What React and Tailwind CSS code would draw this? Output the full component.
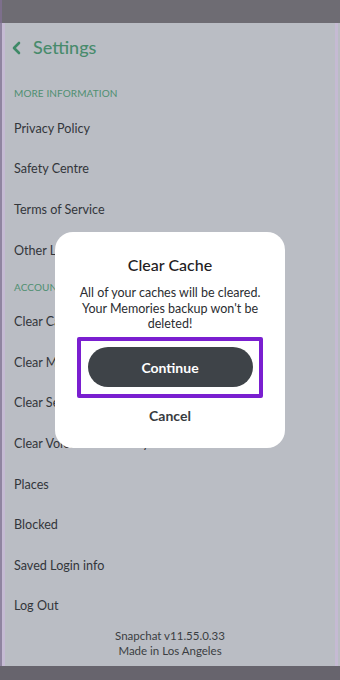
import React from "react";

const moreInfo = ["Privacy Policy", "Safety Centre", "Terms of Service", "Other Legal"];
const account = [
  "Clear Cache",
  "Clear My AI Data",
  "Clear Search History",
  "Clear Voice Scan History",
  "Places",
  "Blocked",
  "Saved Login info",
  "Log Out",
];

const Row = ({ label }) => (
  <div className="h-[40.6px] flex items-center pl-[9px] text-[12.6px] text-[#33363b]">
    {label}
  </div>
);

const SectionLabel = ({ children, className }) => (
  <div className={"pl-[9px] text-[10px] leading-[12px] tracking-[0.1px] text-[#4f8f71] " + className}>
    {children}
  </div>
);

const App = () => {
  return (
    <div
      className="relative w-[340px] h-[680px] flex flex-col bg-[#babdc4] overflow-hidden"
      style={{ fontFamily: "Lato, 'Noto Sans', sans-serif" }}
    >
      <div className="h-[23px] bg-[#6e6c73] border-l-[2px] border-[#7d6f8c]" />
      <div className="flex-1 flex">
        <div className="w-[2px] bg-[#8f84a0]" />
        <div className="w-[3px] bg-[#c5bad3]" />
        <div className="flex-1 flex flex-col">
          <div className="h-[49px] flex items-center gap-[9px] pl-[5px]">
            <svg width="14" height="14" viewBox="0 0 14 14" fill="none">
              <path d="M9 2 L4 7 L9 12" stroke="#3e8a67" strokeWidth="2.6" strokeLinecap="round" strokeLinejoin="round" />
            </svg>
            <span className="text-[18px] font-medium text-[#488b6c]">Settings</span>
          </div>
          <SectionLabel className="h-[37px] pt-[15px]">MORE INFORMATION</SectionLabel>
          {moreInfo.map((l) => (
            <Row key={l} label={l} />
          ))}
          <SectionLabel className="h-[31px] flex items-center">ACCOUNT ACTIONS</SectionLabel>
          {account.map((l) => (
            <Row key={l} label={l} />
          ))}
          <div className="pt-[1px] flex flex-col items-center text-[11.5px] leading-[15px] text-[#3a3d42]">
            <span>Snapchat v11.55.0.33</span>
            <span>Made in Los Angeles</span>
          </div>
        </div>
        <div className="w-[3px] bg-[#c5bad3]" />
        <div className="w-[2px] bg-[#b9bcc3]" />
      </div>
      <div className="h-[14px] bg-[#67646d]" />

      <div className="absolute inset-0 flex items-center justify-center">
        <div className="w-[230px] h-[216px] bg-white rounded-[18px] flex flex-col items-center pt-[22px]">
          <div className="text-[16px] leading-[22px] font-medium text-[#1e2023]">Clear Cache</div>
          <div className="mt-[9px] text-[12.5px] leading-[15.5px] text-[#2b2d31] text-center">
            All of your caches will be cleared.
            <br />
            Your Memories backup won't be
            <br />
            deleted!
          </div>
          <div className="mt-[5px] w-[186px] h-[61px] border-[4px] border-[#7a1fd0] rounded-[2px] flex items-center justify-center">
            <button className="w-[165px] h-[40px] rounded-full bg-[#3e4348] text-white text-[14px] font-bold">
              Continue
            </button>
          </div>
          <div className="mt-[8px] h-[20px] leading-[20px] text-[14px] font-bold text-[#383b3f]">Cancel</div>
        </div>
      </div>
    </div>
  );
};

export default App;
